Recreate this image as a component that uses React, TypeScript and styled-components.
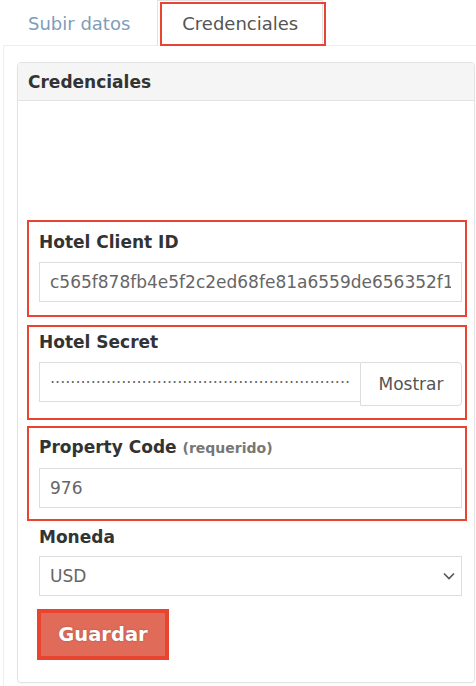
import React from 'react';
import styled, { createGlobalStyle, css } from 'styled-components';

const RED = '#e8442f';
const FONT = '"DejaVu Sans", "Liberation Sans", sans-serif';

const GlobalStyle = createGlobalStyle`
  body {
    margin: 0;
    background: #ffffff;
    font-family: ${FONT};
  }
  * { box-sizing: border-box; }
`;

const TabBar = styled.div`
  display: flex;
  height: 45px;
  padding-left: 3px;
`;

const Tab = styled.div<{ $active?: boolean }>`
  position: relative;
  display: flex;
  align-items: center;
  padding: 0 24px;
  margin-right: 2px;
  font-size: 18px;
  color: #7e9dbb;
  border: 1px solid transparent;
  border-bottom: none;

  ${({ $active }) =>
    $active &&
    css`
      color: #555;
      background: #fff;
      border-color: #e2e2e2;
      margin-bottom: -1px;
      z-index: 1;

      // marco rojo de anotación
      &::after {
        content: '';
        position: absolute;
        top: 1px;
        left: 2px;
        right: -4px;
        bottom: 0;
        border: 2px solid ${RED};
      }
    `}
`;

const Panel = styled.div`
  margin-left: 3px;
  border-top: 1px solid #eee;
  border-left: 1px solid #eee;
  padding: 16px 1px 3px 13px;
`;

const Card = styled.div`
  border: 1px solid #e3e3e3;
  border-radius: 4px;
  background: #fff;
  box-shadow: 0 1px 2px rgba(0, 0, 0, 0.04);
`;

const CardHeader = styled.div`
  height: 38px;
  display: flex;
  align-items: center;
  padding: 0 10px;
  background: #f5f5f5;
  border-bottom: 1px solid #e3e3e3;
  border-radius: 4px 4px 0 0;
  font-size: 17px;
  font-weight: bold;
  color: #333;
`;

const CardBody = styled.div`
  padding: 119px 12px 22px 21px;
`;

const Field = styled.div<{ $marked?: boolean; $pt?: number; $pb?: number; $mb?: number }>`
  margin-bottom: ${({ $mb }) => $mb ?? 0}px;

  ${({ $marked, $pt, $pb }) =>
    $marked &&
    css`
      border: 2px solid ${RED};
      margin-left: -12px;
      margin-right: -5px;
      padding: ${$pt ?? 9}px 3px ${$pb ?? 14}px 10px;
    `}
`;

const Label = styled.div<{ $gap?: number }>`
  font-size: 17px;
  line-height: 22px;
  font-weight: bold;
  color: #333;
  margin-bottom: ${({ $gap }) => $gap ?? 9}px;
`;

const Hint = styled.span`
  font-size: 14px;
  color: #777;
`;

const TextInput = styled.input`
  display: block;
  width: 100%;
  height: 40px;
  padding: 0 10px;
  border: 1px solid #ddd;
  background: #fff;
  font-family: ${FONT};
  font-size: 17px;
  color: #666;
  outline: none;
`;

const SecretRow = styled.div`
  display: flex;
  align-items: flex-start;
`;

const SecretInput = styled(TextInput)`
  flex: 1;
  min-width: 0;
  border-right: none;
  font-size: 16px;
  color: #666;
`;

const ShowButton = styled.button`
  width: 102px;
  height: 44px;
  border: 1px solid #ddd;
  border-radius: 0 4px 4px 0;
  background: #fff;
  font-family: ${FONT};
  font-size: 17px;
  color: #555;
`;

const SelectWrap = styled.div`
  position: relative;
`;

const Select = styled.select`
  display: block;
  width: 100%;
  height: 40px;
  padding: 0 10px;
  border: 1px solid #ddd;
  border-radius: 0;
  background: #fff;
  font-family: ${FONT};
  font-size: 17px;
  color: #666;
  appearance: none;
  outline: none;
`;

const Chevron = styled.svg`
  position: absolute;
  right: 6px;
  top: 50%;
  margin-top: -5px;
  pointer-events: none;
`;

const SaveMark = styled.div`
  display: inline-block;
  border: 4px solid ${RED};
  margin-left: -2px;
`;

const SaveButton = styled.button`
  display: block;
  width: 124px;
  height: 43px;
  border: none;
  background: #e06b59;
  color: #fff;
  font-family: ${FONT};
  font-size: 19.5px;
  font-weight: bold;
  text-shadow: 0 0 2px rgba(0, 0, 0, 0.25);
`;

const SECRET = '·'.repeat(59);

export default function App() {
  return (
    <>
      <GlobalStyle />
      <TabBar>
        <Tab>Subir datos</Tab>
        <Tab $active>Credenciales</Tab>
      </TabBar>
      <Panel>
        <Card>
          <CardHeader>Credenciales</CardHeader>
          <CardBody>
            <Field $marked $pt={9} $pb={13} $mb={8}>
              <Label>Hotel Client ID</Label>
              <TextInput readOnly value="c565f878fb4e5f2c2ed68fe81a6559de656352f1a0b9" />
            </Field>
            <Field $marked $pt={4} $pb={12} $mb={6}>
              <Label>Hotel Secret</Label>
              <SecretRow>
                <SecretInput readOnly value={SECRET} />
                <ShowButton>Mostrar</ShowButton>
              </SecretRow>
            </Field>
            <Field $marked $pt={8} $pb={11} $mb={5}>
              <Label>
                Property Code <Hint>(requerido)</Hint>
              </Label>
              <TextInput readOnly value="976" />
            </Field>
            <Field $mb={13}>
              <Label $gap={8}>Moneda</Label>
              <SelectWrap>
                <Select defaultValue="USD">
                  <option value="USD">USD</option>
                  <option value="EUR">EUR</option>
                </Select>
                <Chevron width="14" height="10" viewBox="0 0 14 10">
                  <path d="M2 2.5l5 5 5-5" fill="none" stroke="#555" strokeWidth="1.6" />
                </Chevron>
              </SelectWrap>
            </Field>
            <SaveMark>
              <SaveButton>Guardar</SaveButton>
            </SaveMark>
          </CardBody>
        </Card>
      </Panel>
    </>
  );
}
